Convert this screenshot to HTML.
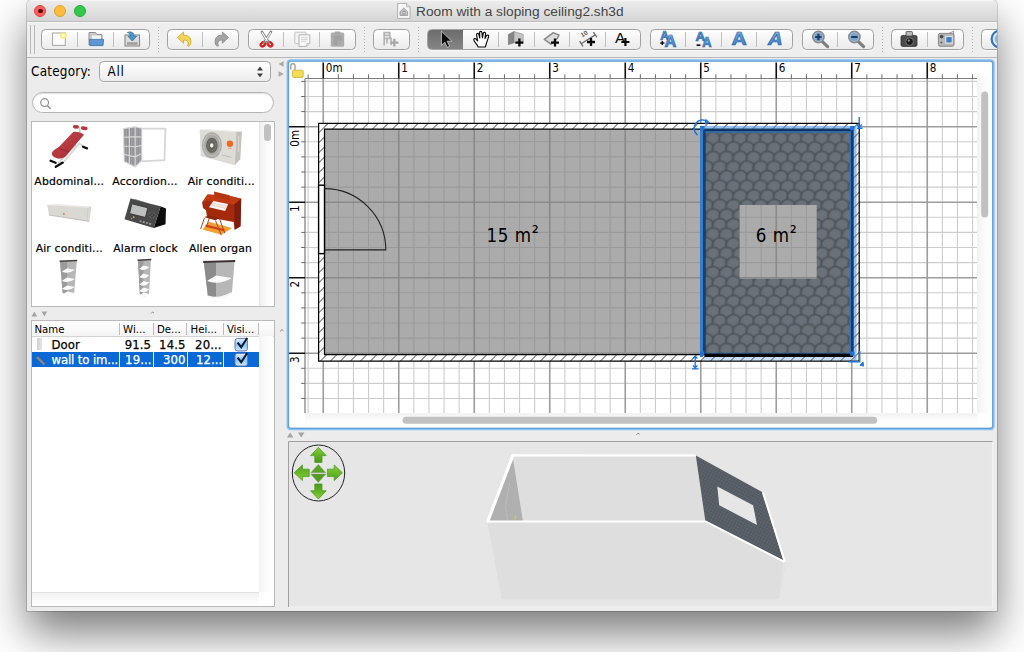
<!DOCTYPE html>
<html lang="en"><head><meta charset="utf-8"><title>Room with a sloping ceiling2.sh3d</title>
<style>
html,body{margin:0;padding:0;background:#fff}
body{width:1024px;height:652px;position:relative;overflow:hidden;font-family:'DejaVu Sans Condensed','DejaVu Sans','Liberation Sans',sans-serif;font-size:13px;color:#000}
.abs{position:absolute}
.win{position:absolute;left:27px;top:0;width:970px;height:611px;background:#ececec;border-radius:5px 5px 0 0;
 box-shadow:0 0 0 1px rgba(0,0,0,0.16),0 22px 44px rgba(0,0,0,0.52);overflow:hidden}
.title{position:absolute;left:0;top:0;width:970px;height:21px;background:linear-gradient(#ececec,#d5d5d5);border-bottom:1px solid #bdbdbd;border-top:1px solid #f6f6f6;box-sizing:border-box;height:22px}
.title .t{position:absolute;left:389px;top:2px;font:13.7px/17px 'Liberation Sans',sans-serif;color:#454545;white-space:nowrap;letter-spacing:0.02px}
.dot{position:absolute;top:3.7px;width:12px;height:12px;border-radius:50%;box-sizing:border-box}
.tbar{position:absolute;left:0;top:22px;width:970px;height:35px;background:#eeeeee;border-bottom:1px solid #b9b9b9;border-top:1px solid #f5f5f5;box-sizing:border-box;height:36px}
.handle{position:absolute;left:3.4px;top:2px;width:2.4px;height:29px;border-left:1.4px solid #b9b9b9;border-right:1.4px solid #b9b9b9}
.grp{position:absolute;top:6px;height:21px;border:1px solid #a2a2a2;border-radius:4.5px;box-sizing:border-box;background:linear-gradient(#ffffff,#f4f4f4 50%,#ebebeb);box-shadow:0 1px 0 rgba(255,255,255,0.7);overflow:hidden}
.grp .sep{position:absolute;top:2px;width:1px;height:15px;background:#c0c0c0}
.grp .sel{position:absolute;top:0;height:19px;background:linear-gradient(#6c6c6c,#858585);}
.dsep{position:absolute;top:3.5px;height:26px;width:1px;background:repeating-linear-gradient(#b2b2b2 0,#b2b2b2 1.2px,transparent 1.2px,transparent 3px)}
.lbl{position:absolute;width:90px;text-align:center;font:10.8px/14px 'DejaVu Sans','Liberation Sans',sans-serif;letter-spacing:0.15px;white-space:nowrap;color:#000;-webkit-text-stroke:0.2px #000}
.combo{position:absolute;left:72px;top:61px;width:172px;height:21px;box-sizing:border-box;border:1px solid #a6a6a6;border-radius:4.5px;background:linear-gradient(#fff,#f6f6f6 45%,#ececec);box-shadow:0 1px 0 rgba(255,255,255,.6)}
.search{position:absolute;left:5px;top:92px;width:242px;height:21px;box-sizing:border-box;border:1px solid #b4b4b4;border-radius:11px;background:#fff;box-shadow:inset 0 1px 1px rgba(0,0,0,0.12)}
.list{position:absolute;left:3.5px;top:120.5px;width:244px;height:186px;box-sizing:border-box;border:1px solid #b9b9b9;background:#fff}
.table{position:absolute;left:3.5px;top:320px;width:244px;height:287px;box-sizing:border-box;border:1px solid #b9b9b9;background:#fff}
.th{position:absolute;top:1.5px;height:12.5px;font:11.3px/13px 'DejaVu Sans Condensed','DejaVu Sans','Liberation Sans',sans-serif;border-right:1px solid #bdbdbd;box-sizing:border-box;padding-left:3px;white-space:nowrap;overflow:hidden}
.td{position:absolute;font:13px/16px 'DejaVu Sans Condensed','DejaVu Sans','Liberation Sans',sans-serif;white-space:nowrap;letter-spacing:0.1px;-webkit-text-stroke:0.25px currentColor}
</style></head><body>
<div class="win">
<div class="title"><div class="dot" style="left:7.4px;background:#fc5d58;border:0.6px solid #e2443f"></div><div class="abs" style="left:11.2px;top:7.5px;width:4.4px;height:4.4px;border-radius:50%;background:#5a0505"></div><div class="dot" style="left:27.2px;background:#fdbc40;border:0.6px solid #dfa023"></div><div class="dot" style="left:47px;background:#34c84a;border:0.6px solid #27aa35"></div><svg class="abs" style="left:369px;top:1px" width="16" height="18" viewBox="0 0 16 18"><path d="M1.6 1.4H10.6L14 4.8V16.4H1.6Z" fill="#f7f7f7" stroke="#a9a9a9" stroke-width="0.9"/><path d="M10.6 1.4V4.8H14" fill="#e2e2e2" stroke="#a9a9a9" stroke-width="0.8"/><path d="M4 9.6L7.8 6L11.6 9.6V13.4H4Z" fill="#c9c9c9" stroke="#8f8f8f" stroke-width="0.8"/><path d="M6 10.6L8 8.6L9.8 10.6M6.4 12H9.4" stroke="#777" stroke-width="0.8" fill="none"/></svg><div class="t">Room with a sloping ceiling2.sh3d</div></div>
<div class="tbar">
<div class="handle"></div>
<div class="grp" style="left:14px;width:109px"><div class="sep" style="left:34.83px"></div><div class="sep" style="left:71.17px"></div></div>
<div class="grp" style="left:139.5px;width:72.5px"><div class="sep" style="left:34.75px"></div></div>
<div class="grp" style="left:220.5px;width:108.0px"><div class="sep" style="left:34.50px"></div><div class="sep" style="left:70.50px"></div></div>
<div class="grp" style="left:345.5px;width:37.0px"></div>
<div class="grp" style="left:400px;width:214.20000000000005px"><div class="sel" style="left:-1.00px;width:36.20px"></div><div class="sep" style="left:69.90px"></div><div class="sep" style="left:105.60px"></div><div class="sep" style="left:141.30px"></div><div class="sep" style="left:177.00px"></div></div>
<div class="grp" style="left:623px;width:142.5px"><div class="sep" style="left:34.12px"></div><div class="sep" style="left:69.75px"></div><div class="sep" style="left:105.38px"></div></div>
<div class="grp" style="left:775px;width:71.79999999999995px"><div class="sep" style="left:34.40px"></div></div>
<div class="grp" style="left:864.2px;width:72.59999999999991px"><div class="sep" style="left:34.80px"></div></div>
<div class="grp" style="left:954px;width:29px"></div>
<div class="dsep" style="left:130.5px"></div>
<div class="dsep" style="left:336.7px"></div>
<div class="dsep" style="left:390.7px"></div>
<div class="dsep" style="left:855.0px"></div>
<div class="dsep" style="left:944.7px"></div>
<svg class="abs" style="left:20.17px;top:5px" width="24" height="22" viewBox="0 0 24 22"><rect x="5.5" y="5" width="12.8" height="12.4" fill="#fbfbfb" stroke="#adadad" stroke-width="1.1"/><circle cx="16.4" cy="7.6" r="3.4" fill="#f6ef6e" fill-opacity="0.9"/><circle cx="16.4" cy="7.6" r="1.7" fill="#fffcd6"/></svg>
<svg class="abs" style="left:56.50px;top:5px" width="24" height="22" viewBox="0 0 24 22"><path d="M5 17V4.5H11.5L13 6.5H18V17Z" fill="#c9c9c9" stroke="#8f8f8f" stroke-width="1"/><rect x="8" y="7.5" width="9" height="5" fill="#f4f4f4"/><path d="M5.4 11.4H19.6L19 17.6H6Z" fill="#5e97d3" stroke="#3f78b8" stroke-width="0.9"/></svg>
<svg class="abs" style="left:92.83px;top:5px" width="24" height="22" viewBox="0 0 24 22"><rect x="5" y="7" width="14.5" height="11" fill="#dcdcdc" stroke="#8a8a8a" stroke-width="1.1"/><rect x="7" y="14.2" width="10.5" height="2.6" fill="#9e9e9e"/><path d="M7.4 4.6C11 3 14 4.4 14 8.2H16.6L12.3 13L8 8.2H10.6C10.6 6.4 9.6 5 7.4 4.6Z" fill="#4f96c6" stroke="#2f74a6" stroke-width="0.8"/></svg>
<svg class="abs" style="left:145.62px;top:5px" width="24" height="22" viewBox="0 0 24 22"><path d="M4.4 9.6L10.6 4V7.2C16.4 7.2 19 10.6 17.4 16.6C16.6 18 15.4 18.4 14.6 18C16 14.4 14.6 12 10.6 12V15.2Z" fill="#f3d35b" stroke="#d2ab2d" stroke-width="0.9" stroke-linejoin="round"/></svg>
<svg class="abs" style="left:181.88px;top:5px" width="24" height="22" viewBox="0 0 24 22"><path d="M19.6 9.6L13.4 4V7.2C7.6 7.2 5 10.6 6.6 16.6C7.4 18 8.6 18.4 9.4 18C8 14.4 9.4 12 13.4 12V15.2Z" fill="#a4a4a4" stroke="#8c8c8c" stroke-width="0.9" stroke-linejoin="round"/></svg>
<svg class="abs" style="left:226.50px;top:5px" width="24" height="22" viewBox="0 0 24 22"><ellipse cx="9" cy="16.2" rx="2.6" ry="1.7" fill="#fff" stroke="#d8201c" stroke-width="2.3" transform="rotate(-40 9 16.2)"/><ellipse cx="16" cy="16.2" rx="2.6" ry="1.7" fill="#fff" stroke="#d8201c" stroke-width="2.3" transform="rotate(40 16 16.2)"/><path d="M7.9 3.9L14.4 14.2M16.9 3.9L10.4 14.2" stroke="#858585" stroke-width="2.7" fill="none" stroke-linecap="round"/><path d="M8.2 4.6L13.2 12.6M16.6 4.6L11.6 12.6" stroke="#f1f1f1" stroke-width="1.1" fill="none" stroke-linecap="round"/></svg>
<svg class="abs" style="left:262.50px;top:5px" width="24" height="22" viewBox="0 0 24 22"><rect x="4.8" y="4.2" width="11.2" height="11.4" rx="0.8" fill="#f3f3f3" stroke="#c2c2c2" stroke-width="1"/><path d="M9 6.8H19.8V15.4L16.8 18.4H9Z" fill="#f8f8f8" stroke="#b3b3b3" stroke-width="1"/><path d="M19.8 15.4H16.8V18.4" fill="#e2e2e2" stroke="#b3b3b3" stroke-width="0.8"/><path d="M11 9.6H17.6M11 11.6H17.6M11 13.6H16" stroke="#cdcdcd" stroke-width="0.9"/></svg>
<svg class="abs" style="left:298.50px;top:5px" width="24" height="22" viewBox="0 0 24 22"><rect x="4.8" y="4.6" width="13.4" height="14.2" rx="1.6" fill="#adadad"/><rect x="8.6" y="3.4" width="5.8" height="2.8" rx="1" fill="#a6a6a6"/><path d="M7.6 7.4H15.6V13.4L12.4 17H7.6Z" fill="#a1a1a1"/><path d="M15.6 13.4H12.4V17" fill="none" stroke="#b8b8b8" stroke-width="0.7"/></svg>
<svg class="abs" style="left:352.00px;top:5px" width="24" height="22" viewBox="0 0 24 22"><path d="M5.2 17.4V4.6H10.8V10.6M5.2 10.4H12V17M5.2 7.4H10.8M8 11V15.4" fill="none" stroke="#b3b3b3" stroke-width="1.7"/><path d="M11.2 14.6H19.4M15.3 10.8V18.4" stroke="#a6a6a6" stroke-width="2.3"/></svg>
<svg class="abs" style="left:405.85px;top:5px" width="24" height="22" viewBox="0 0 24 22"><path d="M8.4 3.2V17.4L11.8 14.2L14.2 19.4L16.6 18.2L14.2 13.2H18.8Z" fill="#0c0c0c" stroke="#e8e8e8" stroke-width="0.7"/></svg>
<svg class="abs" style="left:441.55px;top:5px" width="24" height="22" viewBox="0 0 24 22"><path d="M9.2 19C8.4 16.6 6 14.6 5 12.4C4.4 11 5.6 10 6.8 10.8L8.6 12.8L7.6 7C7.2 5.4 9.2 4.8 9.8 6.4L10.8 10L10.6 4.6C10.6 3 12.8 3 13 4.6L13.4 9.8L14.4 5.2C14.8 3.8 16.8 4.2 16.6 5.8L16 10.6L17.6 7.6C18.4 6.4 20 7.2 19.6 8.6C19 11 18 13.4 17.4 15.4C17 17 16.6 18 16.4 19Z" fill="#fff" stroke="#0a0a0a" stroke-width="1.15" stroke-linejoin="round"/></svg>
<svg class="abs" style="left:477.25px;top:5px" width="24" height="22" viewBox="0 0 24 22"><path d="M4.4 6.4L10 3.6V14.8L4.4 16.6Z" fill="#858585" stroke="#6e6e6e" stroke-width="0.6"/><path d="M10 3.6L19.2 6.2V14L10 14.8Z" fill="#c4c4c4" stroke="#8a8a8a" stroke-width="0.6"/><path d="M11.4 14.6H19.4M15.4 10.6V18.6" stroke="#0a0a0a" stroke-width="2.3"/></svg>
<svg class="abs" style="left:512.95px;top:5px" width="24" height="22" viewBox="0 0 24 22"><path d="M4.3 11.3L13 4.8L19 6.9L17.5 10.2L10.9 16.2Z" fill="#dcdcdc" stroke="#8a8a8a" stroke-width="1.5" stroke-linejoin="round"/><path d="M11 14.6H19M15 10.6V18.6" stroke="#0a0a0a" stroke-width="2.3"/></svg>
<svg class="abs" style="left:548.65px;top:5px" width="24" height="22" viewBox="0 0 24 22"><path d="M5.2 15.7L19.3 6.9M3.6 13.2L7 18.4M17.4 4.2L21 9.4" stroke="#6a6a6a" stroke-width="1.3" fill="none"/><text x="6.2" y="9.6" font-family="'Liberation Sans',sans-serif" font-size="6.5" font-weight="bold" fill="#555" transform="rotate(-32 6.2 9.6)">10</text><path d="M11 14H19M15 10V18" stroke="#0a0a0a" stroke-width="2.3"/></svg>
<div class="abs" style="left:584.15px;top:5px;width:18px;text-align:center;font:15.4px/20px 'Liberation Sans',sans-serif;color:#0a0a0a">A</div>
<svg class="abs" style="left:584.35px;top:5px" width="24" height="22" viewBox="0 0 24 22"><path d="M10.4 14H18.4M14.4 10V18" stroke="#0a0a0a" stroke-width="2.2"/></svg>
<svg class="abs" width="0" height="0"><defs><linearGradient id="blueA" x1="0" x2="0" y1="0" y2="1"><stop offset="0" stop-color="#8dbbe8"/><stop offset="0.5" stop-color="#5a96d4"/><stop offset="1" stop-color="#3573bb"/></linearGradient></defs></svg>
<svg class="abs" style="left:628.81px;top:5px" width="24" height="22" viewBox="0 0 24 22"><text transform="translate(4.2 11.6) scale(1.0 1)" font-family="'Liberation Sans',sans-serif" font-weight="bold" font-size="12" fill="url(#blueA)" stroke="#2b67ab" stroke-width="0.7" >A</text><text transform="translate(8.4 19) scale(1.05 1)" font-family="'Liberation Sans',sans-serif" font-weight="bold" font-size="15.6" fill="url(#blueA)" stroke="#2b67ab" stroke-width="0.7" >A</text><path d="M4.2 15H8.4M6.3 12.9V17.1" stroke="#111" stroke-width="1.4"/></svg>
<svg class="abs" style="left:664.44px;top:5px" width="24" height="22" viewBox="0 0 24 22"><text transform="translate(4.6 12.5) scale(1.05 1)" font-family="'Liberation Sans',sans-serif" font-weight="bold" font-size="12.8" fill="url(#blueA)" stroke="#2b67ab" stroke-width="0.7" >A</text><text transform="translate(11.3 19) scale(0.92 1)" font-family="'Liberation Sans',sans-serif" font-weight="bold" font-size="14" fill="url(#blueA)" stroke="#2b67ab" stroke-width="0.7" >A</text><path d="M5.6 17.2H9.4" stroke="#111" stroke-width="1.7"/></svg>
<svg class="abs" style="left:700.06px;top:5px" width="24" height="22" viewBox="0 0 24 22"><text transform="translate(4.6 16.8) scale(1.2 1)" font-family="'Liberation Sans',sans-serif" font-weight="bold" font-size="17.6" fill="url(#blueA)" stroke="#2b67ab" stroke-width="0.7" >A</text></svg>
<svg class="abs" style="left:735.69px;top:5px" width="24" height="22" viewBox="0 0 24 22"><text transform="translate(5.0 16.8) scale(1.15 1)" font-family="'Liberation Sans',sans-serif" font-weight="bold" font-size="17.6" fill="url(#blueA)" stroke="#2b67ab" stroke-width="0.7" font-style="italic">A</text></svg>
<svg class="abs" style="left:780.95px;top:5px" width="24" height="22" viewBox="0 0 24 22"><path d="M14.4 13.6L19.6 18.6" stroke="#7e7e7e" stroke-width="3.2" stroke-linecap="round"/><circle cx="10.4" cy="9" r="5.6" fill="#a9c4df" stroke="#8a8a8a" stroke-width="1.6"/><circle cx="10.4" cy="9" r="4.1" fill="#7ba3cc"/><path d="M7.2 9H13.6" stroke="#1d3f66" stroke-width="2.2"/><path d="M10.4 5.8V12.2" stroke="#1d3f66" stroke-width="2.2"/></svg>
<svg class="abs" style="left:816.85px;top:5px" width="24" height="22" viewBox="0 0 24 22"><path d="M14.4 13.6L19.6 18.6" stroke="#7e7e7e" stroke-width="3.2" stroke-linecap="round"/><circle cx="10.4" cy="9" r="5.6" fill="#a9c4df" stroke="#8a8a8a" stroke-width="1.6"/><circle cx="10.4" cy="9" r="4.1" fill="#7ba3cc"/><path d="M7.2 9H13.6" stroke="#1d3f66" stroke-width="2.2"/></svg>
<svg class="abs" style="left:870.35px;top:5px" width="24" height="22" viewBox="0 0 24 22"><rect x="4" y="7.4" width="16" height="11" rx="1.6" fill="#4c4c4c" stroke="#2e2e2e" stroke-width="0.8"/><rect x="9" y="3.6" width="6.4" height="4.4" rx="0.8" fill="#bdbdbd" stroke="#444" stroke-width="0.8"/><circle cx="12.6" cy="13.6" r="3.9" fill="#1e1e1e" stroke="#777" stroke-width="1"/><circle cx="11.8" cy="12.6" r="1.1" fill="#9a9a9a"/></svg>
<svg class="abs" style="left:906.65px;top:5px" width="24" height="22" viewBox="0 0 24 22"><rect x="4.4" y="5.4" width="15.6" height="12.8" rx="1.6" fill="#b9b9b9" stroke="#7c7c7c" stroke-width="0.9"/><path d="M15 5.4L19.6 3.2V6.4" fill="none" stroke="#8a8a8a" stroke-width="0.9"/><rect x="11.8" y="8.6" width="6.4" height="6.4" fill="#3f7fc4" stroke="#e9e9e9" stroke-width="1"/><circle cx="7.6" cy="8.6" r="1.9" fill="#4a4a4a"/><circle cx="7.4" cy="14.4" r="1" fill="#5a5a5a"/></svg>
<svg class="abs" style="left:961.30px;top:5px" width="24" height="22" viewBox="0 0 24 22"><circle cx="12" cy="11" r="8.4" fill="#dfeaf6" stroke="#3575c0" stroke-width="2.2"/><circle cx="12" cy="11" r="5.4" fill="#8fb4dd"/></svg>
</div>
<div class="abs" style="left:4px;top:63px;font:13.4px/18px 'DejaVu Sans Condensed','DejaVu Sans','Liberation Sans',sans-serif;letter-spacing:0.22px">Category:</div>
<div class="combo"><div class="abs" style="left:7.6px;top:1px;font:13.4px/17px 'DejaVu Sans Condensed','DejaVu Sans','Liberation Sans',sans-serif;letter-spacing:0.7px">All</div><svg class="abs" style="left:156px;top:3px" width="8" height="14" viewBox="0 0 8 14"><path d="M1 5.4L4 1.6L7 5.4ZM1 8.4L4 12.2L7 8.4Z" fill="#3d3d3d"/></svg></div>
<div class="search"><svg class="abs" style="left:6px;top:3.5px" width="14" height="14" viewBox="0 0 14 14"><circle cx="5.6" cy="5.6" r="3.9" fill="none" stroke="#8e8e8e" stroke-width="1.2"/><path d="M8.4 8.6L11.6 12" stroke="#8e8e8e" stroke-width="1.4"/></svg></div>
<div class="list"><div class="abs" style="right:0;top:0;width:15px;height:184px;background:linear-gradient(90deg,#f0f0f0,#fbfbfb 50%,#fff);border-left:1px solid #e6e6e6;box-sizing:border-box"></div><div class="abs" style="left:232.4px;top:2.6px;width:7px;height:17px;border-radius:3.5px;background:#c1c1c1"></div></div>
<div class="lbl" style="left:-2.75px;top:175.20px">Abdominal...</div>
<div class="lbl" style="left:73.00px;top:175.20px">Accordion...</div>
<div class="lbl" style="left:149.25px;top:175.20px">Air conditi...</div>
<div class="lbl" style="left:-2.75px;top:242.40px">Air conditi...</div>
<div class="lbl" style="left:73.50px;top:242.40px">Alarm clock</div>
<div class="lbl" style="left:148.50px;top:242.40px">Allen organ</div>
<svg class="abs" style="left:3px;top:308px" width="160" height="12" viewBox="0 0 160 12"><path d="M1.6 8.4L4.4 3.6L7.2 8.4ZM11.6 3.6L14.4 8.4L17.2 3.6Z" fill="#a4a4a4"/><path d="M121 5.6L122.6 4L124 5" stroke="#8e8e8e" stroke-width="1" fill="none"/></svg>
<div class="table">
<div class="abs" style="left:0;top:0;width:242px;height:16px;background:linear-gradient(#fff,#f4f4f4);border-bottom:1px solid #d4d4d4;box-sizing:border-box"></div>
<div class="th" style="left:0px;width:88.6px">Name</div>
<div class="th" style="left:88.6px;width:33.80000000000001px">Wi...</div>
<div class="th" style="left:122.4px;width:33.599999999999994px">De...</div>
<div class="th" style="left:156px;width:36.400000000000006px">Hei...</div>
<div class="th" style="left:192.4px;width:35.0px">Visi...</div>
<div class="abs" style="left:227.4px;top:15px;width:14.6px;height:256px;background:linear-gradient(90deg,#f3f3f3,#fbfbfb 50%,#fff);"></div>
<div class="abs" style="left:0;top:271px;width:227.4px;height:14px;background:linear-gradient(#f0f0f0,#fafafa 50%,#fff);border-top:1px solid #e2e2e2;box-sizing:border-box"></div>
<div class="abs" style="left:0;top:31px;width:227.4px;height:15.2px;background:#0b69d6"></div>
<div class="abs" style="left:87.6px;top:31px;width:1.2px;height:15.2px;background:#e9f1fb"></div>
<div class="abs" style="left:121.4px;top:31px;width:1.2px;height:15.2px;background:#e9f1fb"></div>
<div class="abs" style="left:155px;top:31px;width:1.2px;height:15.2px;background:#e9f1fb"></div>
<div class="abs" style="left:191.4px;top:31px;width:1.2px;height:15.2px;background:#e9f1fb"></div>
<div class="abs" style="left:5.6px;top:17.4px;width:5.4px;height:12px;background:linear-gradient(90deg,#d0d0d0,#e6e6e6)"></div>
<svg class="abs" style="left:3px;top:34px" width="12" height="12" viewBox="0 0 12 12"><path d="M0.6 2.4L3.2 1.2L10.6 8.8L8.4 10.6Z" fill="#6f7f98" stroke="#51627e" stroke-width="0.7"/><path d="M2.2 2.8L8.8 9.4" stroke="#8d9bb1" stroke-width="0.9"/></svg>
<div class="td" style="left:20px;top:15.6px">Door</div>
<div class="td" style="left:93.2px;top:15.6px">91.5</div><div class="td" style="left:127.6px;top:15.6px">14.5</div><div class="td" style="left:163.6px;top:15.6px">20...</div>
<div class="td" style="left:20px;top:30.6px;color:#fff;letter-spacing:-0.12px">wall to im...</div>
<div class="td" style="left:93.6px;top:30.8px;color:#fff">19...</div><div class="td" style="left:131.4px;top:30.8px;color:#fff">300</div><div class="td" style="left:164.4px;top:30.8px;color:#fff">12...</div>
<svg class="abs" style="left:201.6px;top:15.2px" width="18" height="16" viewBox="0 0 18 16"><defs><linearGradient id="cbga" x1="0" x2="0" y1="0" y2="1"><stop offset="0" stop-color="#e6f3fd"/><stop offset="0.5" stop-color="#8fc6f5"/><stop offset="1" stop-color="#cfeafc"/></linearGradient></defs><rect x="2" y="2.4" width="12.4" height="12.6" rx="2.6" fill="url(#cbga)" stroke="#6a74b8" stroke-width="1"/><path d="M4.6 6.6L8.2 11.2L14.2 2" fill="none" stroke="#0a1a33" stroke-width="2.1" stroke-linejoin="miter"/></svg>
<svg class="abs" style="left:201.6px;top:30.4px" width="18" height="16" viewBox="0 0 18 16"><defs><linearGradient id="cbgb" x1="0" x2="0" y1="0" y2="1"><stop offset="0" stop-color="#e6f3fd"/><stop offset="0.5" stop-color="#8fc6f5"/><stop offset="1" stop-color="#cfeafc"/></linearGradient></defs><rect x="2" y="2.4" width="12.4" height="12.6" rx="2.6" fill="url(#cbgb)" stroke="#6a74b8" stroke-width="1"/><path d="M4.6 6.6L8.2 11.2L14.2 2" fill="none" stroke="#0a1a33" stroke-width="2.1" stroke-linejoin="miter"/></svg>
</div>
<svg class="abs" style="left:249px;top:58px" width="12" height="290" viewBox="0 0 12 290"><path d="M7.6 3.2L2.4 6L7.6 8.8ZM2.6 13.2L7.8 16L2.6 18.8Z" fill="#a8a8a8"/><path d="M4.4 273.6L5.6 271.6L7.4 272.6" stroke="#8e8e8e" stroke-width="1" fill="none"/></svg>
<svg class="abs" style="left:258px;top:429px" width="400" height="12" viewBox="0 0 400 12"><path d="M2 8.4L5.2 3.4L8.4 8.4ZM13 3.6L16.2 8.6L19.4 3.6Z" fill="#a4a4a4"/><path d="M351.4 5.8L353 4.2L354.6 5.2" stroke="#8e8e8e" stroke-width="1" fill="none"/></svg>
</div>
<svg class="abs" style="left:0;top:0" width="1024" height="652" viewBox="0 0 1024 652">
<defs><clipPath id="catc"><rect x="32" y="122" width="227" height="184.5"/></clipPath><linearGradient id="benchg" x1="0" x2="1" y1="0" y2="1"><stop offset="0" stop-color="#c24a50"/><stop offset="0.6" stop-color="#b2363c"/><stop offset="1" stop-color="#9a2a30"/></linearGradient><pattern id="panes" patternUnits="userSpaceOnUse" width="1.6" height="4" x="123"><rect width="1.6" height="4" fill="#8f8f94"/><rect width="0.6" height="4" fill="#a8a8ad"/></pattern><filter id="soft" x="-10%" y="-10%" width="120%" height="120%"><feGaussianBlur stdDeviation="0.35"/></filter></defs><g clip-path="url(#catc)" filter="url(#soft)">
<path d="M64 161.6L79.4 143.4L84.6 147" stroke="#d9d9d9" stroke-width="1.8" fill="none"/><path d="M58 163L76 145" stroke="#cfcfcf" stroke-width="1.6" fill="none"/><path d="M79.8 127.4V133" stroke="#c9c9c9" stroke-width="1.4"/><path d="M50.6 160.8L55.6 162.8M55.8 166.8L62.8 162.6M83 146.8L87 148.4" stroke="#111" stroke-width="2.3" stroke-linecap="round" fill="none"/><path d="M52 154.4C51.4 151.4 54 149.6 58.4 147.4L73.2 132C76.6 131.4 81.6 132.6 84 134.8L68.8 152.6C67 156 63.6 158.4 60.6 158.6C56.6 158.6 53 157 52 154.4Z" fill="url(#benchg)"/><path d="M58.4 147.4C62 150.4 66 151.4 69.4 151.2" stroke="#8e252b" stroke-width="0.8" fill="none"/><rect x="73" y="125.2" width="6" height="3.4" rx="1.6" fill="#b8383e" transform="rotate(6 76 127)"/><rect x="81" y="126.4" width="6.6" height="3.6" rx="1.7" fill="#b8383e" transform="rotate(8 84 128)"/>
<path d="M141.6 128.6H165.4L164.4 160.2L141.6 161.4" fill="none" stroke="#d6d6d6" stroke-width="1.8"/><path d="M123.4 128.6L135.2 126.8L141.8 128.2V160.4L135.2 167L124.2 161.4Z" fill="url(#panes)"/><path d="M123.4 128.6L135.2 126.8L141.8 128.2V160.4L135.2 167L124.2 161.4ZM135.2 126.8V167M129.4 127.8V164.2M123.6 137.2L135.2 136.6L141.8 137M123.8 146L135.2 146.8L141.8 145.4M124 154.4L135.2 156.8L141.8 153.4" fill="none" stroke="#d9d9d9" stroke-width="1.1"/>
<path d="M199.6 129.6L236.3 132L234.7 165.2L200.8 156Z" fill="#dddcd7"/><path d="M236.3 132L241.9 131.2L240.3 159.2L234.7 165.2Z" fill="#c2c1bb"/><path d="M199.6 129.6L236.3 132L241.9 131.2L206 129.2Z" fill="#e9e8e4"/><path d="M238.6 136V152" stroke="#dcdbd6" stroke-width="1"/><ellipse cx="211.9" cy="145.2" rx="10" ry="13" fill="#aaa9a4"/><ellipse cx="211.9" cy="145.2" rx="8.4" ry="11" fill="none" stroke="#c5c4bf" stroke-width="1"/><ellipse cx="211.9" cy="145.4" rx="5.8" ry="7.6" fill="#66665f"/><ellipse cx="211.9" cy="145.4" rx="3.9" ry="5.2" fill="none" stroke="#8d8d88" stroke-width="0.9" stroke-dasharray="0.9 0.9"/><ellipse cx="211.7" cy="145.4" rx="1.7" ry="2.1" fill="#f4f4f0"/><circle cx="229.9" cy="143.8" r="3.2" fill="#ee6a1f"/><path d="M227.8 148.4H231.6" stroke="#ee8a55" stroke-width="0.7"/><path d="M221.6 155L231.6 157.4" stroke="#b9b8b3" stroke-width="0.9"/>
<path d="M47.2 205L91.4 206.4L89.4 221.4L49 215Z" fill="#d9d8d3"/><path d="M47.2 205L55 203.8L91.4 206.4L88 207.8Z" fill="#ecebe7"/><path d="M49 215L89.4 221.4" stroke="#bcbbb5" stroke-width="0.9"/><path d="M88 207.8L87 220.8" stroke="#c9c8c2" stroke-width="0.7"/><circle cx="63.9" cy="213.9" r="0.9" fill="#ee6a3a"/>
<path d="M160.6 206.4L166 208.6L165.5 224.2L153.7 227.9Z" fill="#0b0b0b"/><path d="M130.5 198.5L160.6 206.4L153.7 227.9L124.5 219.3Z" fill="#484848"/><path d="M130.5 198.5L160.6 206.4L166 208.6L136 199.6Z" fill="#2a2a2a"/><path d="M131.8 203.8L147.8 207.8L145.4 217.4L129.6 213.6Z" fill="#bcc0c0" stroke="#2c2c2c" stroke-width="0.8"/><circle cx="152" cy="215" r="3" fill="#3a3a3a" stroke="#6a6a6a" stroke-width="0.7"/><path d="M150 213L154 217M150 217L154 213" stroke="#6a6a6a" stroke-width="0.6"/><path d="M139.6 221L151.6 224.2" stroke="#9d9d9d" stroke-width="1.7" stroke-dasharray="2 1.3"/><circle cx="133.7" cy="217.2" r="0.9" fill="#d9b92e"/><circle cx="131.6" cy="218.6" r="0.7" fill="#d9b92e"/>
<path d="M202.5 229.4L209 221.7L232 227.9L221.3 234.8Z" fill="#f0a030"/><path d="M205.6 225.6L224.4 230.2" stroke="#d2401a" stroke-width="2.2"/><path d="M202.1 202.6L207.5 194.5L229 195.7L241.2 198.7L240.5 226.3L234.7 229.8L233.6 222L207 217L206 210.2L203 208Z" fill="#a42b0e"/><path d="M202.1 202.6L207.5 194.5L229 195.7L241.2 198.7L234.2 204.4L207 200.4Z" fill="#c23a13"/><path d="M234.2 204.4L241.2 198.7L240.5 226.3L234.7 229.8Z" fill="#7e1e08"/><path d="M214 191.5L229.7 195.3L229 200.3L214.4 196.4Z" fill="#b23412"/><path d="M213.3 201L228.2 204.1L225.1 211L209 207.2Z" fill="#fdf8f4"/><path d="M211.8 203L227.2 206.4M210.6 204.8L226.2 208.4" stroke="#e2a896" stroke-width="0.5"/><path d="M204.4 218L200.6 229M209.6 217.4L206.6 226M215.5 220.6L221.3 235.2M219.6 219L224.8 233.2" stroke="#b3421c" stroke-width="1" fill="none"/><path d="M204 217.1L209.8 215.6L219.8 218.3L215.2 220.2Z" fill="#8e260c"/>
<path d="M60 261.2L76.8 260.59999999999997L74.2 293L67.1 296L62.6 292.6Z" fill="#b6b6b6"/><path d="M60 261.2L67.1 261.8L67.1 296L62.6 292.6Z" fill="#9b9b9b"/><path d="M61.9 271.59999999999997L67.1 268.2L74.9 269.8Q68.1 274.8 61.9 271.59999999999997Z" fill="#fafafa"/><path d="M61.9 280.79999999999995L67.1 277.4L74.9 279.0Q68.1 284.0 61.9 280.79999999999995Z" fill="#fafafa"/><path d="M61.9 288.79999999999995L67.1 285.4L74.9 287.0Q68.1 292.0 61.9 288.79999999999995Z" fill="#fafafa"/><path d="M61.9 294.79999999999995L67.1 291.4L74.9 293.0Q68.1 298.0 61.9 294.79999999999995Z" fill="#fafafa"/><path d="M59.6 261.2L77.2 260.5" stroke="#4a3e3e" stroke-width="1.5"/>
<path d="M138 260.2L150.9 259.59999999999997L149.1 294L143.4 297L139.8 293.6Z" fill="#b6b6b6"/><path d="M138 260.2L143.4 260.8L143.4 297L139.8 293.6Z" fill="#9b9b9b"/><path d="M139.5 268.79999999999995L143.4 265.4L149.4 267.0Q144.4 272.0 139.5 268.79999999999995Z" fill="#fafafa"/><path d="M139.5 277.0L143.4 273.6L149.4 275.20000000000005Q144.4 280.20000000000005 139.5 277.0Z" fill="#fafafa"/><path d="M139.5 284.4L143.4 281L149.4 282.6Q144.4 287.6 139.5 284.4Z" fill="#fafafa"/><path d="M139.5 291.0L143.4 287.6L149.4 289.20000000000005Q144.4 294.20000000000005 139.5 291.0Z" fill="#fafafa"/><path d="M139.5 295.79999999999995L143.4 292.4L149.4 294.0Q144.4 299.0 139.5 295.79999999999995Z" fill="#fafafa"/><path d="M137.6 260.2L151.3 259.5" stroke="#4a3e3e" stroke-width="1.5"/>
<path d="M203.8 262L234.6 261.2L231.9 293L216 298L207.9 296Z" fill="#b7b7b7"/><path d="M203.8 262L216 262.4V298L207.9 296Z" fill="#8b8b8b"/><path d="M207 281L216 275.6L231.9 278Q219 285.6 207 281Z" fill="#fbfbfb"/><path d="M208 296.2Q220 300 231.6 292.6" stroke="#f4f4f4" stroke-width="1.6" fill="none"/><path d="M203.2 262L235.2 261" stroke="#3e3232" stroke-width="1.9"/>
</g></svg>
<svg class="abs" style="left:0;top:0" width="1024" height="652" viewBox="0 0 1024 652">
<defs>
<clipPath id="vp"><rect x="305" y="78.5" width="672" height="334.5"/></clipPath>
<pattern id="hatch" patternUnits="userSpaceOnUse" width="10" height="10" x="318.5" y="123"><rect width="10" height="10" fill="#fff"/><path d="M-2 12L12 -2M-7 7L7 -7M3 17L17 3" stroke="#1a1a1a" stroke-width="0.85"/></pattern>
<pattern id="scales" patternUnits="userSpaceOnUse" width="13.6" height="19.2" x="706.3" y="131.6">
<rect width="13.6" height="19.2" fill="#4d555c"/>
<circle cx="-6.80" cy="-11.10" r="7.6" fill="url(#sg)" stroke="#454d54" stroke-opacity="0.6" stroke-width="2.1"/>
<circle cx="6.80" cy="-11.10" r="7.6" fill="url(#sg)" stroke="#454d54" stroke-opacity="0.6" stroke-width="2.1"/>
<circle cx="20.40" cy="-11.10" r="7.6" fill="url(#sg)" stroke="#454d54" stroke-opacity="0.6" stroke-width="2.1"/>
<circle cx="34.00" cy="-11.10" r="7.6" fill="url(#sg)" stroke="#454d54" stroke-opacity="0.6" stroke-width="2.1"/>
<circle cx="-13.60" cy="-1.50" r="7.6" fill="url(#sg)" stroke="#454d54" stroke-opacity="0.6" stroke-width="2.1"/>
<circle cx="0.00" cy="-1.50" r="7.6" fill="url(#sg)" stroke="#454d54" stroke-opacity="0.6" stroke-width="2.1"/>
<circle cx="13.60" cy="-1.50" r="7.6" fill="url(#sg)" stroke="#454d54" stroke-opacity="0.6" stroke-width="2.1"/>
<circle cx="27.20" cy="-1.50" r="7.6" fill="url(#sg)" stroke="#454d54" stroke-opacity="0.6" stroke-width="2.1"/>
<circle cx="-6.80" cy="8.10" r="7.6" fill="url(#sg)" stroke="#454d54" stroke-opacity="0.6" stroke-width="2.1"/>
<circle cx="6.80" cy="8.10" r="7.6" fill="url(#sg)" stroke="#454d54" stroke-opacity="0.6" stroke-width="2.1"/>
<circle cx="20.40" cy="8.10" r="7.6" fill="url(#sg)" stroke="#454d54" stroke-opacity="0.6" stroke-width="2.1"/>
<circle cx="34.00" cy="8.10" r="7.6" fill="url(#sg)" stroke="#454d54" stroke-opacity="0.6" stroke-width="2.1"/>
<circle cx="-13.60" cy="17.70" r="7.6" fill="url(#sg)" stroke="#454d54" stroke-opacity="0.6" stroke-width="2.1"/>
<circle cx="0.00" cy="17.70" r="7.6" fill="url(#sg)" stroke="#454d54" stroke-opacity="0.6" stroke-width="2.1"/>
<circle cx="13.60" cy="17.70" r="7.6" fill="url(#sg)" stroke="#454d54" stroke-opacity="0.6" stroke-width="2.1"/>
<circle cx="27.20" cy="17.70" r="7.6" fill="url(#sg)" stroke="#454d54" stroke-opacity="0.6" stroke-width="2.1"/>
<circle cx="-6.80" cy="27.30" r="7.6" fill="url(#sg)" stroke="#454d54" stroke-opacity="0.6" stroke-width="2.1"/>
<circle cx="6.80" cy="27.30" r="7.6" fill="url(#sg)" stroke="#454d54" stroke-opacity="0.6" stroke-width="2.1"/>
<circle cx="20.40" cy="27.30" r="7.6" fill="url(#sg)" stroke="#454d54" stroke-opacity="0.6" stroke-width="2.1"/>
<circle cx="34.00" cy="27.30" r="7.6" fill="url(#sg)" stroke="#454d54" stroke-opacity="0.6" stroke-width="2.1"/>
</pattern>
<radialGradient id="sg" cx="0.5" cy="0.4" r="0.6"><stop offset="0" stop-color="#6c7279"/><stop offset="0.55" stop-color="#686e75"/><stop offset="1" stop-color="#5a6168"/></radialGradient>
<filter id="sblur" x="-2%" y="-2%" width="104%" height="104%"><feGaussianBlur stdDeviation="0.55"/></filter>
</defs>
<rect x="289" y="62" width="703" height="365" fill="#fff"/>
<g clip-path="url(#vp)">
<path d="M308.15 78.5V413M338.35 78.5V413M353.45 78.5V413M368.55 78.5V413M383.65 78.5V413M413.85 78.5V413M428.95 78.5V413M444.05 78.5V413M459.15 78.5V413M489.35 78.5V413M504.45 78.5V413M519.55 78.5V413M534.65 78.5V413M564.85 78.5V413M579.95 78.5V413M595.05 78.5V413M610.15 78.5V413M640.35 78.5V413M655.45 78.5V413M670.55 78.5V413M685.65 78.5V413M715.85 78.5V413M730.95 78.5V413M746.05 78.5V413M761.15 78.5V413M791.35 78.5V413M806.45 78.5V413M821.55 78.5V413M836.65 78.5V413M866.85 78.5V413M881.95 78.5V413M897.05 78.5V413M912.15 78.5V413M942.35 78.5V413M957.45 78.5V413M972.55 78.5V413M305 81.40H977M305 96.50H977M305 111.60H977M305 141.80H977M305 156.90H977M305 172.00H977M305 187.10H977M305 217.30H977M305 232.40H977M305 247.50H977M305 262.60H977M305 292.80H977M305 307.90H977M305 323.00H977M305 338.10H977M305 368.30H977M305 383.40H977M305 398.50H977M305 413.60H977" stroke="#cdcdcd" stroke-width="1.1" fill="none"/>
<path d="M323.25 78.5V413M398.75 78.5V413M474.25 78.5V413M549.75 78.5V413M625.25 78.5V413M700.75 78.5V413M776.25 78.5V413M851.75 78.5V413M927.25 78.5V413M305 126.70H977M305 202.20H977M305 277.70H977M305 353.20H977" stroke="#9d9d9d" stroke-width="1.6" fill="none"/>
<rect x="324.5" y="129" width="528.5" height="225.60000000000002" fill="#808080" fill-opacity="0.66"/>
<path fill-rule="evenodd" d="M318.6 123.3H859.2V361.2H318.6ZM324.5 129V354.6H853V129Z" fill="url(#hatch)" stroke="#000" stroke-width="1.25" stroke-linejoin="miter"/>
<rect x="318.6" y="185.2" width="10.2" height="68.6" rx="1.5" fill="none" stroke="#9a9a9a" stroke-width="0.8"/>
<rect x="318.6" y="185.2" width="5.9" height="68.4" fill="#fff" stroke="#000" stroke-width="1.4"/>
<path d="M324.5 188.6A61.3 61.3 0 0 1 385.8 249.9H324.5" fill="none" stroke="#222" stroke-width="1.1"/>
<text x="486.6" y="242" letter-spacing="0.55" font-family="'DejaVu Sans Condensed','DejaVu Sans','Liberation Sans',sans-serif" font-size="18.6" fill="#000">15 m<tspan dy="-2.4" font-size="19.6">²</tspan></text>
<path fill-rule="evenodd" d="M703.00 129.20H853.20V353.60H703.00ZM739.6 204.9V278.7H816.7V204.9Z" fill="url(#scales)" filter="url(#sblur)"/>
<rect x="703.00" y="125.9" width="153.60" height="3.3" fill="#2f7fe0" fill-opacity="0.5"/>
<rect x="853.20" y="129.20" width="3.4" height="231.20" fill="#2f7fe0" fill-opacity="0.5"/>
<rect x="703.00" y="357.00" width="150.20" height="3.4" fill="#2f7fe0" fill-opacity="0.25"/>
<rect x="700.00" y="125.9" width="3" height="231.10" fill="#3a7ecb"/>
<rect x="703.00" y="129.20" width="150.20" height="2.1" fill="#0d315f"/>
<rect x="703.00" y="129.20" width="2.7" height="224.40" fill="#123f7a"/>
<rect x="851.00" y="129.20" width="2.2" height="224.40" fill="#103a72"/>
<rect x="705.70" y="131.30" width="145.30" height="1.4" fill="#2e6fb6"/>
<rect x="849.70" y="131.30" width="1.3" height="222.30" fill="#2e6fb6"/>
<rect x="705.70" y="352.70" width="145.30" height="1" fill="#2e6fb6"/>
<rect x="704.50" y="353.60" width="148.70" height="3.4" fill="#000"/>
<text x="755.8" y="241.9" letter-spacing="0.55" font-family="'DejaVu Sans Condensed','DejaVu Sans','Liberation Sans',sans-serif" font-size="18.6" fill="#000">6 m<tspan dy="-2.4" font-size="19.6">²</tspan></text>
<path d="M697.6 135.2A8.2 8.2 0 0 1 707.5 121.6" fill="none" stroke="#1b74dc" stroke-width="1.5"/><path d="M705.8 119.4L709.6 122.6L705 124.2Z" fill="#1b74dc" stroke="#1b74dc" stroke-width="0.8"/>
<rect x="700" y="126" width="4.2" height="4.2" fill="#1b74dc"/><rect x="850.2" y="126" width="4.2" height="4.2" fill="#1b74dc"/><rect x="700" y="351.5" width="4.2" height="4.2" fill="#1b74dc"/><rect x="850.2" y="351.5" width="4.2" height="4.2" fill="#1b74dc"/>
<path d="M859.2 117V127.5M856.6 124.4L859.2 127.6L861.8 124.4M857 128.3H862.4" fill="none" stroke="#1b74dc" stroke-width="1.4"/>
<path d="M695.2 356V368.6M692 368.8H698.4M693 358.6L695.2 356L697.4 358.6M693 365.4L695.2 368L697.4 365.4" fill="none" stroke="#1b74dc" stroke-width="1.3"/>
<path d="M848.4 361.8H859.6V350.8" fill="none" stroke="#1b74dc" stroke-width="1.6"/><path d="M859.8 365.2L863.2 362L863.6 366.2Z" fill="#1b74dc" stroke="#1b74dc" stroke-width="0.8" stroke-linejoin="round"/>
</g>
<path d="M305 78.5H977M305 78.5V413" stroke="#7d7d7d" stroke-width="1.2" fill="none"/>
<path d="M308.15 74.4V78.5M338.35 74.4V78.5M353.45 74.4V78.5M368.55 74.4V78.5M383.65 74.4V78.5M413.85 74.4V78.5M428.95 74.4V78.5M444.05 74.4V78.5M459.15 74.4V78.5M489.35 74.4V78.5M504.45 74.4V78.5M519.55 74.4V78.5M534.65 74.4V78.5M564.85 74.4V78.5M579.95 74.4V78.5M595.05 74.4V78.5M610.15 74.4V78.5M640.35 74.4V78.5M655.45 74.4V78.5M670.55 74.4V78.5M685.65 74.4V78.5M715.85 74.4V78.5M730.95 74.4V78.5M746.05 74.4V78.5M761.15 74.4V78.5M791.35 74.4V78.5M806.45 74.4V78.5M821.55 74.4V78.5M836.65 74.4V78.5M866.85 74.4V78.5M881.95 74.4V78.5M897.05 74.4V78.5M912.15 74.4V78.5M942.35 74.4V78.5M957.45 74.4V78.5M972.55 74.4V78.5M301.2 81.40H305M301.2 96.50H305M301.2 111.60H305M301.2 141.80H305M301.2 156.90H305M301.2 172.00H305M301.2 187.10H305M301.2 217.30H305M301.2 232.40H305M301.2 247.50H305M301.2 262.60H305M301.2 292.80H305M301.2 307.90H305M301.2 323.00H305M301.2 338.10H305M301.2 368.30H305M301.2 383.40H305M301.2 398.50H305" stroke="#6a6a6a" stroke-width="1" fill="none"/>
<path d="M323.25 62.5V78.5M398.75 62.5V78.5M474.25 62.5V78.5M549.75 62.5V78.5M625.25 62.5V78.5M700.75 62.5V78.5M776.25 62.5V78.5M851.75 62.5V78.5M927.25 62.5V78.5M289 126.70H305M289 202.20H305M289 277.70H305M289 353.20H305" stroke="#111" stroke-width="1.6" fill="none"/>
<text x="325.85" y="72.3" font-family="'DejaVu Sans Condensed','DejaVu Sans','Liberation Sans',sans-serif" font-size="11.6" fill="#000">0m</text>
<text x="401.35" y="72.3" font-family="'DejaVu Sans Condensed','DejaVu Sans','Liberation Sans',sans-serif" font-size="11.6" fill="#000">1</text>
<text x="476.85" y="72.3" font-family="'DejaVu Sans Condensed','DejaVu Sans','Liberation Sans',sans-serif" font-size="11.6" fill="#000">2</text>
<text x="552.35" y="72.3" font-family="'DejaVu Sans Condensed','DejaVu Sans','Liberation Sans',sans-serif" font-size="11.6" fill="#000">3</text>
<text x="627.85" y="72.3" font-family="'DejaVu Sans Condensed','DejaVu Sans','Liberation Sans',sans-serif" font-size="11.6" fill="#000">4</text>
<text x="703.35" y="72.3" font-family="'DejaVu Sans Condensed','DejaVu Sans','Liberation Sans',sans-serif" font-size="11.6" fill="#000">5</text>
<text x="778.85" y="72.3" font-family="'DejaVu Sans Condensed','DejaVu Sans','Liberation Sans',sans-serif" font-size="11.6" fill="#000">6</text>
<text x="854.35" y="72.3" font-family="'DejaVu Sans Condensed','DejaVu Sans','Liberation Sans',sans-serif" font-size="11.6" fill="#000">7</text>
<text x="929.85" y="72.3" font-family="'DejaVu Sans Condensed','DejaVu Sans','Liberation Sans',sans-serif" font-size="11.6" fill="#000">8</text>
<text transform="translate(299.2 129.90) rotate(-90)" text-anchor="end" font-family="'DejaVu Sans Condensed','DejaVu Sans','Liberation Sans',sans-serif" font-size="11.6" fill="#000">0m</text>
<text transform="translate(299.2 205.40) rotate(-90)" text-anchor="end" font-family="'DejaVu Sans Condensed','DejaVu Sans','Liberation Sans',sans-serif" font-size="11.6" fill="#000">1</text>
<text transform="translate(299.2 280.90) rotate(-90)" text-anchor="end" font-family="'DejaVu Sans Condensed','DejaVu Sans','Liberation Sans',sans-serif" font-size="11.6" fill="#000">2</text>
<text transform="translate(299.2 356.40) rotate(-90)" text-anchor="end" font-family="'DejaVu Sans Condensed','DejaVu Sans','Liberation Sans',sans-serif" font-size="11.6" fill="#000">3</text>
<path d="M290.8 69.6V65.8A2.1 2.1 0 0 1 295 65.8V70" fill="none" stroke="#a2a2a2" stroke-width="1.4"/><rect x="292.6" y="70.2" width="10.6" height="7.2" rx="1" fill="#f1de55" stroke="#c9ae2a" stroke-width="0.8"/>
<defs><linearGradient id="vtr" x1="0" x2="1" y1="0" y2="0"><stop offset="0" stop-color="#f2f2f2"/><stop offset="0.5" stop-color="#fbfbfb"/><stop offset="1" stop-color="#fff"/></linearGradient><linearGradient id="htr" x1="0" x2="0" y1="0" y2="1"><stop offset="0" stop-color="#f2f2f2"/><stop offset="0.5" stop-color="#fbfbfb"/><stop offset="1" stop-color="#fff"/></linearGradient></defs>
<rect x="977" y="78.5" width="15" height="334.5" fill="url(#vtr)"/>
<rect x="305" y="413" width="672" height="14" fill="url(#htr)"/>
<rect x="981.2" y="91.6" width="7" height="126" rx="3.5" fill="#c1c1c1"/>
<rect x="402.6" y="416.8" width="474.6" height="7" rx="3.5" fill="#c1c1c1"/>
<rect x="287.3" y="59.9" width="706.6" height="369.7" rx="3.4" fill="none" stroke="#86c1f5" stroke-width="1.5"/><rect x="288.5" y="61.1" width="704.2" height="367.3" rx="2.4" fill="none" stroke="#629fdc" stroke-width="1.3"/>
</svg>
<svg class="abs" style="left:0;top:0" width="1024" height="652" viewBox="0 0 1024 652">
<defs><pattern id="roof3d" patternUnits="userSpaceOnUse" width="3" height="3" patternTransform="rotate(28)"><rect width="3" height="3" fill="#5c636a"/><path d="M0 0H3M0 0V3" stroke="#4a5159" stroke-width="0.8"/></pattern><clipPath id="c3d"><rect x="289" y="442" width="703" height="165"/></clipPath></defs>
<rect x="288.5" y="441.5" width="704" height="165.5" fill="#e6e6e6"/><path d="M288.5 607V441.5H992.5" fill="none" stroke="#a0a0a0" stroke-width="1"/><path d="M289 607H992.5V442" fill="none" stroke="#f3f3f3" stroke-width="1.2"/>
<g clip-path="url(#c3d)">
<polygon points="512.5,455.2 695.8,455.6 705.4,521.4 523,521.4" fill="#dedede"/>
<polygon points="512.5,455.2 523,521.4 487.6,521.4" fill="#b0b0b0"/>
<path d="M509.5 483.4L505.6 506.6L507.4 520" fill="none" stroke="#c9c9c9" stroke-width="0.8" stroke-dasharray="1.5 1"/>
<rect x="514.6" y="516" width="1.6" height="3" fill="#e4c52a"/>
<polygon points="487.2,521.4 705.4,521.4 783.4,561 779.2,599.2 501.8,599.2" fill="#dedede"/>
<polygon points="783.4,561 786,563 779.6,599.2 779.2,599.2" fill="#e2e2e2"/>
<path fill-rule="evenodd" d="M695.8 455.6L762.6 492.2L783.4 560.8L705.4 521.4ZM717.3 486.4L719.2 505.3L757 524.9L753.1 505.2Z" fill="url(#roof3d)"/>
<path d="M487.2 521.6L512.5 455.2L695.8 455.6M487 521.4H705.4L784.6 561.8M762.8 492.2L785 562" fill="none" stroke="#fff" stroke-width="2" stroke-linejoin="round"/><path d="M488 521L512.9 455.6" fill="none" stroke="#fff" stroke-width="3" stroke-linecap="round"/>
</g>
<defs><linearGradient id="gr" x1="0" x2="0" y1="0" y2="1"><stop offset="0" stop-color="#86d034"/><stop offset="1" stop-color="#46981a"/></linearGradient><linearGradient id="grh" x1="0" x2="1" y1="0" y2="0"><stop offset="0" stop-color="#86d034"/><stop offset="1" stop-color="#4ea01c"/></linearGradient></defs>
<ellipse cx="318.5" cy="473" rx="26.2" ry="28" fill="none" stroke="#222" stroke-width="1"/>
<path transform="translate(318.4 455)" d="M0 -7.6L7.8 0.6H3.6V7.4H-3.6V0.6H-7.8Z" fill="url(#gr)" stroke="#4c9a1e" stroke-width="0.8"/>
<path transform="translate(318.4 491.4) rotate(180)" d="M0 -7.6L7.8 0.6H3.6V7.4H-3.6V0.6H-7.8Z" fill="url(#gr)" stroke="#4c9a1e" stroke-width="0.8"/>
<path transform="translate(301.8 472.8) rotate(-90)" d="M0 -7.6L7.8 0.6H3.6V7.4H-3.6V0.6H-7.8Z" fill="url(#grh)" stroke="#4c9a1e" stroke-width="0.8"/>
<path transform="translate(334.8 472.8) rotate(90)" d="M0 -7.6L7.8 0.6H3.6V7.4H-3.6V0.6H-7.8Z" fill="url(#grh)" stroke="#4c9a1e" stroke-width="0.8"/>
<path d="M318.3 464.4L325.8 472.8H310.8Z" fill="#55a422" stroke="#8a8a8a" stroke-width="0.5"/><path d="M318.3 482.4L325.8 474H310.8Z" fill="#4f9e1e" stroke="#8a8a8a" stroke-width="0.5"/><path d="M310.6 473.4H326" stroke="#d6d6d6" stroke-width="0.9"/>
</svg>
</body></html>
